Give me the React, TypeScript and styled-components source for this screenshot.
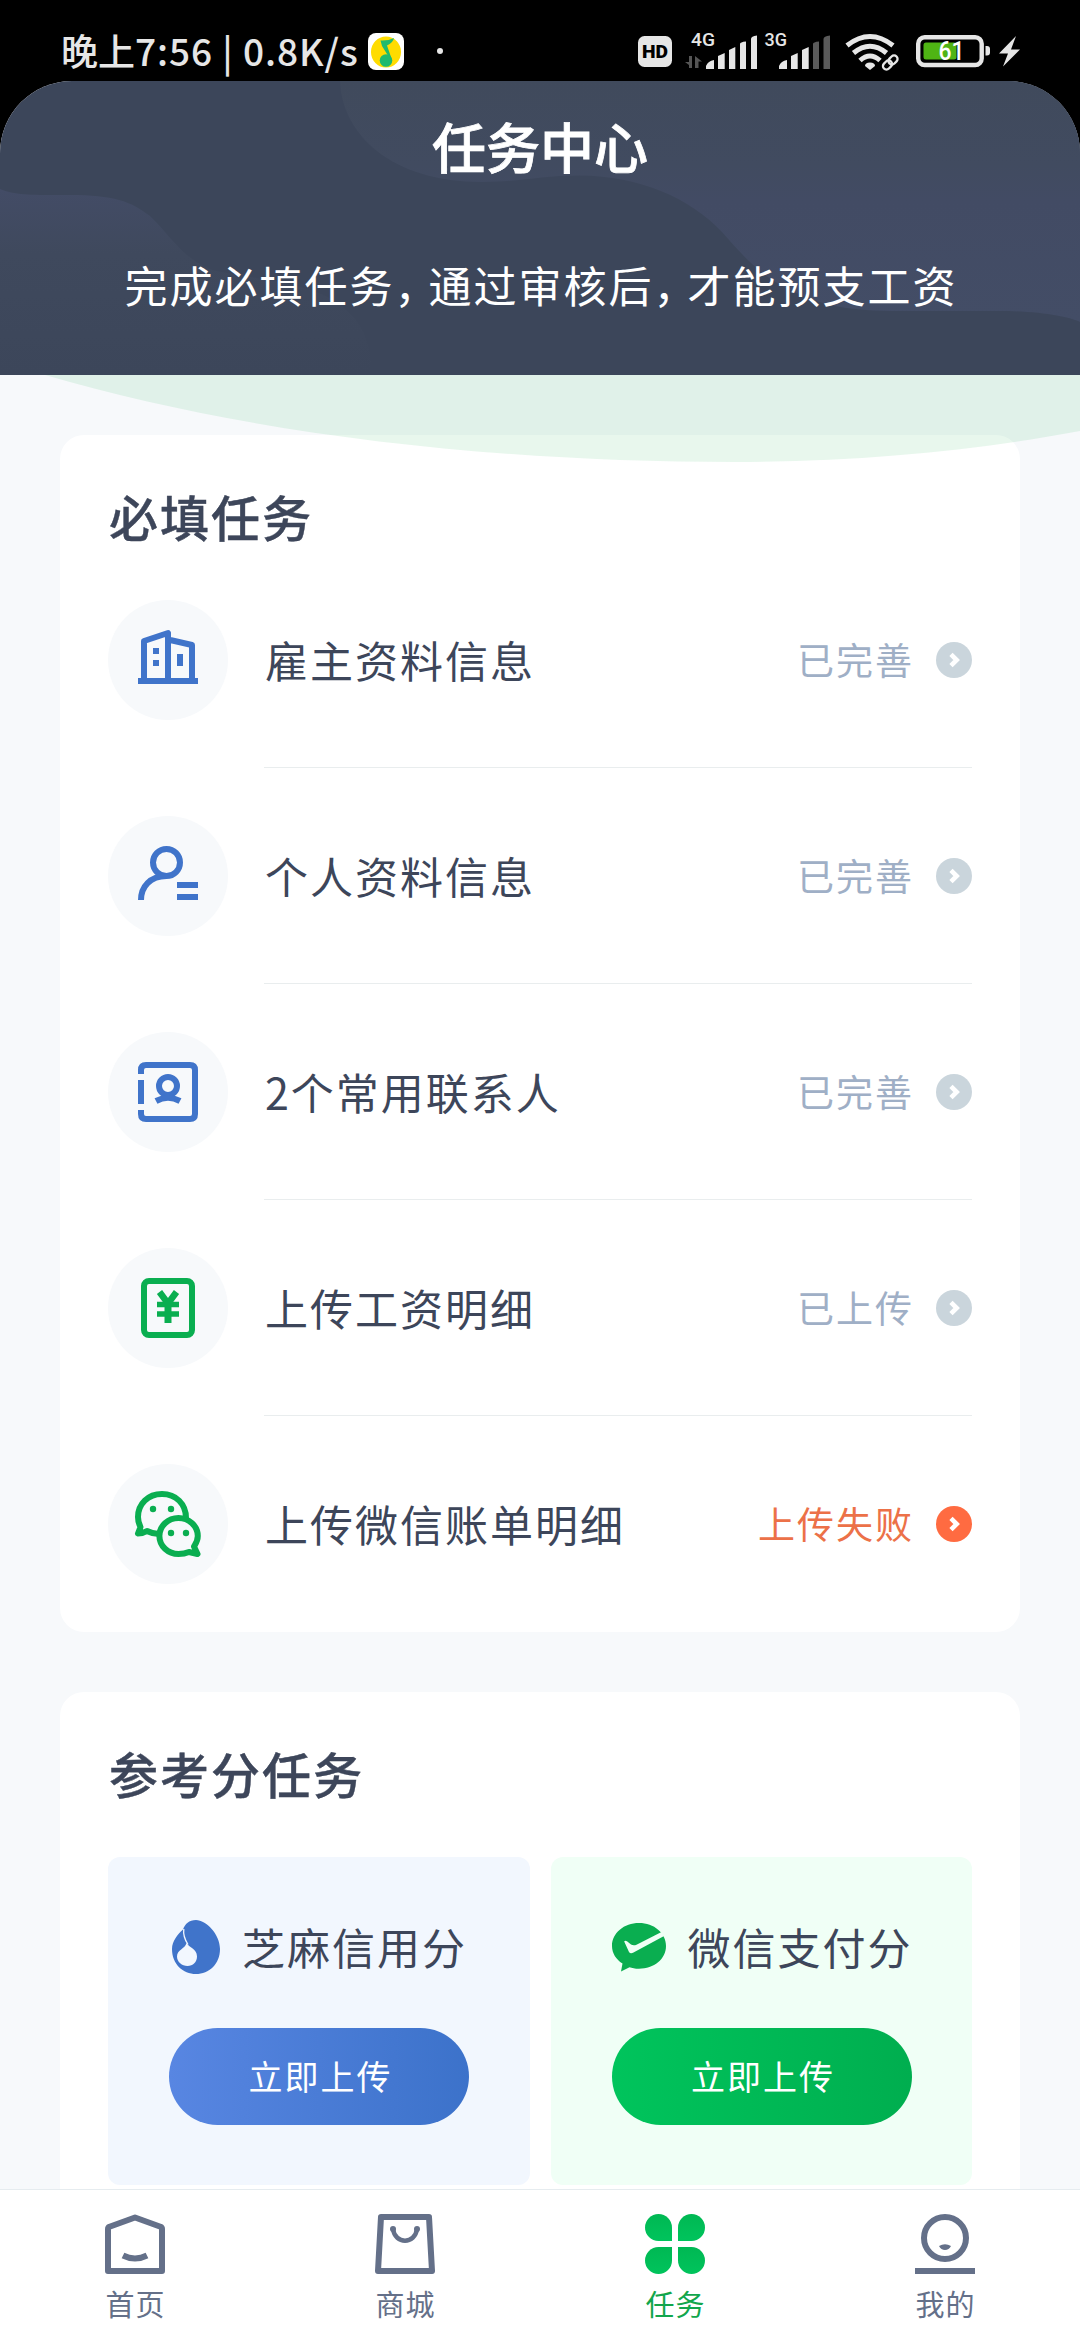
import React from "react";
import styled, { createGlobalStyle } from "styled-components";

const INK = "#3d465a";
const BLUE = "#4074ca";
const GREEN = "#0aae50";
const SLATE = "#647089";

const GlobalStyle = createGlobalStyle`
  *, *::before, *::after { box-sizing: border-box; }
  html, body { margin: 0; padding: 0; background: #000; }
  body { font-family: "Noto Sans CJK SC", "Noto Sans", sans-serif; color: ${INK}; }
  svg { display: block; flex: none; }
`;

const Screen = styled.div`
  width: 1080px;
  height: 2340px;
  display: flex;
  flex-direction: column;
  overflow: hidden;
  background: #000;
`;

/* ---------- status bar ---------- */

const StatusBar = styled.div`
  height: 81px;
  flex: none;
  display: flex;
  align-items: flex-start;
  justify-content: space-between;
  padding: 26px 60px 0 61px;
  color: #e6e6e6;
`;

const StatusGroup = styled.div`
  display: flex;
  align-items: center;
  height: 50px;
`;

const Clock = styled.span`
  width: 307px;
  height: 50px;
  padding-bottom: 2px;
  display: flex;
  align-items: center;
  font-size: 37px;
  line-height: 48px;
  font-weight: 500;
  white-space: pre;
`;

const ClockLatin = styled.span`
  font-size: 37px;
  letter-spacing: 0.95px;
`;

const Dot = styled.span`
  width: 6px;
  height: 6px;
  margin-left: 33px;
  border-radius: 50%;
  background: #e6e6e6;
`;

/* ---------- header ---------- */

const AppFrame = styled.div`
  position: relative;
  flex: 1;
  min-height: 0;
  display: flex;
  flex-direction: column;
  border-radius: 72px 72px 0 0;
  overflow: hidden;
  background: #f7f9fb;
`;

const Header = styled.header`
  position: relative;
  height: 294px;
  flex: none;
  display: flex;
  flex-direction: column;
  align-items: center;
  background: #3c465a;
  color: #fff;
`;

const HeaderArt = styled.svg`
  position: absolute;
  inset: 0;
`;

const Title = styled.h1`
  position: relative;
  margin: 25px 0 0;
  font-size: 54px;
  line-height: 80px;
  font-weight: 500;
  -webkit-text-stroke: 0.8px #fff;
`;

const Subtitle = styled.p`
  position: relative;
  margin: 67px 0 0;
  padding-left: 2px;
  font-size: 43px;
  line-height: 62px;
  letter-spacing: 2px;
  white-space: nowrap;
`;

const Comma = styled.span`
  letter-spacing: -9px;
`;

const Swoosh = styled.svg`
  position: absolute;
  left: 0;
  top: 294px;
  z-index: 2;
  pointer-events: none;
`;

/* ---------- cards ---------- */

const Content = styled.main`
  flex: 1;
  min-height: 0;
  overflow: hidden;
  display: flex;
  flex-direction: column;
  gap: 60px;
  padding: 60px 60px 0;
`;

const Card = styled.section<{ $height: number }>`
  flex: none;
  height: ${(p) => p.$height}px;
  padding: 46px 48px 0;
  border-radius: 24px;
  background: #fff;
`;

const CardTitle = styled.h2`
  margin: 0;
  padding-left: 1px;
  font-size: 49px;
  line-height: 70px;
  font-weight: 500;
  letter-spacing: 2px;
  -webkit-text-stroke: 0.4px ${INK};
`;

const TaskList = styled.ul`
  margin: 1px 0 0;
  padding: 0;
  list-style: none;
`;

const TaskRow = styled.li`
  height: 216px;
  display: flex;
  align-items: center;
  gap: 36px;
`;

const TaskIcon = styled.div`
  width: 120px;
  height: 120px;
  flex: none;
  display: grid;
  place-items: center;
  border-radius: 50%;
  background: #f7f9fb;
`;

const TaskBody = styled.div<{ $last: boolean }>`
  flex: 1;
  height: 216px;
  display: flex;
  align-items: center;
  padding-top: 1px;
  border-bottom: 1px solid ${(p) => (p.$last ? "transparent" : "#e9edee")};
`;

const TaskLabel = styled.span`
  flex: 1;
  padding: 0 0 2px 1px;
  font-size: 43px;
  line-height: 60px;
  letter-spacing: 2px;
`;

const TaskState = styled.span<{ $failed: boolean }>`
  margin-right: 22px;
  padding-bottom: 1px;
  font-size: 37px;
  line-height: 55px;
  letter-spacing: 2px;
  color: ${(p) => (p.$failed ? "#ec7148" : "#9fafc6")};
`;

const ScoreGrid = styled.div`
  display: grid;
  grid-template-columns: 422px 421px;
  gap: 21px;
  margin-top: 49px;
`;

const ScoreBox = styled.div<{ $bg: string }>`
  height: 328px;
  display: flex;
  flex-direction: column;
  align-items: center;
  padding-top: 60px;
  border-radius: 12px;
  background: ${(p) => p.$bg};
`;

const ScoreHead = styled.div`
  width: 300px;
  height: 60px;
  display: flex;
  align-items: center;
  gap: 19px;
`;

const ScoreName = styled.span<{ $shift: number }>`
  margin-left: ${(p) => p.$shift}px;
  padding-bottom: 2px;
  font-size: 43px;
  line-height: 60px;
  letter-spacing: 2px;
  white-space: nowrap;
`;

const UploadButton = styled.button<{ $from: string; $to: string }>`
  width: 300px;
  height: 97px;
  margin-top: 51px;
  padding: 0 0 2px 3px;
  border: 0;
  border-radius: 49px;
  background: linear-gradient(90deg, ${(p) => p.$from}, ${(p) => p.$to});
  color: #fff;
  font-family: inherit;
  font-size: 34px;
  letter-spacing: 2px;
`;

/* ---------- tab bar ---------- */

const TabBar = styled.nav`
  height: 151px;
  flex: none;
  display: grid;
  grid-template-columns: repeat(4, 1fr);
  border-top: 1px solid #e6ecef;
  background: #fff;
`;

const Tab = styled.div<{ $active?: boolean }>`
  display: flex;
  flex-direction: column;
  align-items: center;
  gap: 9px;
  padding-top: 24px;
  font-size: 29px;
  line-height: 40px;
  letter-spacing: 1px;
  text-indent: 1px;
  color: ${(p) => (p.$active ? "#12a64c" : SLATE)};
`;

/* ---------- drawings ---------- */

const MusicIcon = () => (
  <svg width="36" height="37" viewBox="0 0 36 37">
    <rect width="36" height="37" rx="8" fill="#fff" />
    <ellipse cx="18" cy="19" rx="15" ry="15.5" fill="#ffdc00" />
    <path d="M12.5 7.5 Q20 8 26 5 Q25 10 19 12.500 L23 24 L21.500 25 L14 13 Z" fill="#1fba6e" />
    <circle cx="18" cy="27.500" r="6.300" fill="#1fba6e" />
  </svg>
);

const StatusIcons = () => (
  <svg width="384" height="50" viewBox="636 26 384 50" fill="#e6e6e6">
    <rect x="638" y="36" width="34" height="31" rx="6.500" />
    <text x="642" y="58" fontSize="18" fontWeight="900" fill="#000" textLength="26" lengthAdjust="spacingAndGlyphs" fontFamily="Roboto, sans-serif">HD</text>
    <text x="691" y="46" fontSize="17.500" fontWeight="500" textLength="24" lengthAdjust="spacingAndGlyphs" fontFamily="Roboto, sans-serif">4G</text>
    <g fill="#555">
      <path d="M692 56 V68 H689 V65 L685 62 H689 V56Z" />
      <path d="M695 68 V56 L702 61.500 H698.500 V68Z" />
    </g>
    <path d="M706 69 V66 Q708 61 714 60 V69Z M718 69 V56 L724.700 53 V69Z M729 69 V50 L735.300 47 V69Z M740 69 V44 Q740 42 746 41.500 V69Z M751 69 V39 Q751 36 757 35.500 V69Z" />
    <text x="764.500" y="46" fontSize="17.500" fontWeight="500" textLength="22.500" lengthAdjust="spacingAndGlyphs" fontFamily="Roboto, sans-serif">3G</text>
    <path d="M779 69 V66 Q781 61 787 60 V69Z M791 69 V56 L797.700 53 V69Z M802 69 V50 L808.700 47 V69Z" />
    <path d="M813 69 V44 Q813 42 819 41.500 V69Z M823.500 69 V39 Q823.500 36 830 35.500 V69Z" fill="#5a5a5a" />
    <g fill="none" stroke="#e6e6e6" strokeWidth="5">
      <path d="M847 45.500 Q870 27.500 893 45.500" />
      <path d="M853.500 53 Q870 39.500 886.500 53" />
      <path d="M860 60.500 Q870 51.500 880 60.500" />
    </g>
    <path d="M865 66 Q865 62.500 870 62.500 Q875 62.500 875 66 L870 70Z" />
    <g fill="none" stroke="#000" strokeWidth="6">
      <rect x="-5" y="-3.500" width="9" height="7" rx="3.500" transform="translate(887.500 65.500) rotate(-45)" />
      <rect x="-4" y="-3.500" width="9" height="7" rx="3.500" transform="translate(893 60) rotate(-45)" />
    </g>
    <g fill="none" stroke="#e6e6e6" strokeWidth="2.300">
      <rect x="-5" y="-3.500" width="10" height="7" rx="3.500" transform="translate(887.500 65) rotate(-45)" />
      <rect x="-5" y="-3.500" width="10" height="7" rx="3.500" transform="translate(893 60) rotate(-45)" />
    </g>
    <rect x="918.200" y="37.200" width="63.500" height="27.800" rx="6.500" fill="none" stroke="#e6e6e6" strokeWidth="4.400" />
    <path d="M985.500 46 H987 Q990 46 990 49 V52.500 Q990 55.500 987 55.500 H985.500Z" />
    <rect x="923.500" y="42.500" width="33" height="17" rx="2.500" fill="#4fb414" />
    <text x="938.500" y="60" fontSize="25" fontWeight="500" fill="#fff" textLength="26" lengthAdjust="spacingAndGlyphs" fontFamily="Roboto, sans-serif">61</text>
    <path d="M1016 36 L999 53.500 H1008 L1003 66.500 L1020 49.500 H1011 Z" />
  </svg>
);

const HeaderWaves = () => (
  <HeaderArt width="1080" height="294" viewBox="0 81 1080 294">
    <defs>
      <linearGradient id="waveRight" x1="0" y1="0" x2="0" y2="1">
        <stop offset="0" stopColor="#404a5c" />
        <stop offset="0.35" stopColor="#414b60" />
        <stop offset="0.5" stopColor="#424b64" />
        <stop offset="1" stopColor="#434d66" />
      </linearGradient>
      <linearGradient id="waveLeft" x1="0" y1="0" x2="0" y2="1">
        <stop offset="0" stopColor="#434c66" />
        <stop offset="0.35" stopColor="#3f495d" />
        <stop offset="1" stopColor="#3c465a" />
      </linearGradient>
    </defs>
    <path fill="url(#waveRight)" d="M340 81 C342 135 392 182 482 182 C520 182 540 175.500 580 175.500 C640 176 690 198 722 232 C745 258 760 275 790 290 C822 306 850 311 900 311 L1000 311 C1040 311 1070 317 1080 322 V81Z" />
    <path fill="url(#waveLeft)" d="M0 189 C14 195 30 195 60 195 C110 194 130 200 150 216 C170 235 182 258 212 270 C280 285 372 280 372 375 H0Z" />
  </HeaderArt>
);

const BuildingIcon = () => (
  <svg width="72" height="72" viewBox="0 0 72 72" fill="none" stroke={BLUE} strokeWidth="6" strokeLinejoin="round">
    <path d="M12 57 V17 L36 9 V57 M36 15.500 L60 21 V57" />
    <path d="M6 57 H66" />
    <path d="M21 27 H27 M21 39 H27" />
    <path d="M48 30 V42" />
  </svg>
);

const PersonIcon = () => (
  <svg width="72" height="72" viewBox="0 0 72 72" fill="none" stroke={BLUE} strokeWidth="6">
    <circle cx="34.500" cy="22.500" r="13.500" />
    <path d="M9 60 C9 47 18 36 34.500 36 M45 45 H66 M45 57 H66" />
  </svg>
);

const ContactIcon = () => (
  <svg width="72" height="72" viewBox="0 0 72 72" fill="none" stroke={BLUE} strokeWidth="6">
    <path d="M9 18 V14 Q9 9 14 9 H58 Q63 9 63 14 V58 Q63 63 58 63 H14 Q9 63 9 58 V54 M9 24 V48" />
    <circle cx="36" cy="30" r="9" />
    <path d="M24 45 Q36 38.500 48 45" />
  </svg>
);

const PayrollIcon = () => (
  <svg width="72" height="72" viewBox="0 0 72 72" fill="none" stroke={GREEN} strokeWidth="6">
    <rect x="12" y="9" width="48" height="54" rx="5" />
    <path d="M27.500 20 L36 31.500 L44.500 20" strokeWidth="6.500" />
    <path d="M36 30 V51" strokeWidth="7" />
    <path d="M25 32.500 H47 M25 42 H47" strokeWidth="5.500" />
  </svg>
);

const WechatIcon = () => (
  <svg width="72" height="72" viewBox="0 0 72 72" fill="none" stroke={GREEN} strokeWidth="6" strokeLinejoin="round">
    <path d="M54 30 C54 16 44 6 30 6 C16 6 6 16 6 29 C6 34 7 36 8.500 39 L6 45.500 Q11 45.500 15 43 C19 45 23 46 27 46" />
    <path d="M46.500 30 C57 30 65.800 38 65.800 48 C65.800 53 63.500 56 62 58.500 L65.500 66 L57 64 C53.500 65.500 50 66 46.500 66 C36 66 27.400 58 27.400 48 C27.400 38 36 30 46.500 30Z" />
    <g fill={GREEN} stroke="none">
      <circle cx="21" cy="21" r="3.200" />
      <circle cx="39" cy="21" r="3.200" />
      <circle cx="39" cy="45" r="3.200" />
      <circle cx="54" cy="45" r="3.200" />
    </g>
  </svg>
);

const Chevron = ({ color }: { color: string }) => (
  <svg width="36" height="36" viewBox="0 0 36 36">
    <circle cx="18" cy="18" r="18" fill={color} />
    <path d="M15 12.300 L20.700 18 L15 23.700" fill="none" stroke="#fff" strokeWidth="4.600" />
  </svg>
);

const SesameIcon = () => (
  <svg width="54" height="54" viewBox="0 0 54 54">
    <path fill={BLUE} d="M27 0 C37 0 51 14 51 29 C51 44 40 54 27 54 C14 54 3 44 3 29 C3 21 9 14 14 9.500 C16 4 20 0 27 0Z" />
    <path d="M14.800 9 C14 15 16 20 19 24.500" fill="none" stroke="#f2f7fe" strokeWidth="1.300" />
    <path fill="#f2f7fe" d="M17.500 23 C20 27.500 28 28.500 28 36.500 C28 42 24 46 18.500 46 C13 46 8 42 8 36.500 C8 29.500 16 29 17.500 23Z" />
  </svg>
);

const WechatPayIcon = () => (
  <svg width="54" height="54" viewBox="0 0 54 54">
    <path fill={GREEN} d="M27 3 C42 3 54 13 54 26 C54 39 42 48.700 27 48.700 C23 48.700 20 48 17.500 47.200 L9 51.500 L10.500 43.500 C4 39.500 0 33 0 26 C0 13 12 3 27 3Z" />
    <path fill="#f0fff6" d="M12.200 21.500 Q12.700 20 15 21.200 L19 24.500 Q21.500 26 24.500 24.700 L49.500 12 L53 15.500 L21.500 32.500 Q18.500 34.300 17 32Z" />
  </svg>
);

const HomeIcon = () => (
  <svg width="60" height="60" viewBox="0 0 60 60" fill="none" stroke={SLATE} strokeWidth="6" strokeLinejoin="round">
    <path d="M30 3.500 L55.500 12.800 Q57 13.500 57 15 V57 H3 V15 Q3 13.500 4.500 12.800Z" />
    <path d="M18 41.500 Q30 47.500 42 41.500" />
  </svg>
);

const BagIcon = () => (
  <svg width="60" height="60" viewBox="0 0 60 60" fill="none" stroke={SLATE} strokeLinejoin="round">
    <path d="M6 3 H54 L57 57 H3Z" strokeWidth="6" />
    <path d="M18 15 C20 30.500 40 30.500 42 15" strokeWidth="4.500" />
    <circle cx="18" cy="15" r="3" fill={SLATE} stroke="none" />
    <circle cx="42" cy="15" r="3" fill={SLATE} stroke="none" />
  </svg>
);

const CloverIcon = () => (
  <svg width="60" height="60" viewBox="0 0 60 60">
    <defs>
      <linearGradient id="petal" x1="0" y1="0" x2="0" y2="1">
        <stop offset="0" stopColor="#00b853" />
        <stop offset="1" stopColor="#00c45c" />
      </linearGradient>
    </defs>
    <g fill="url(#petal)">
      <path d="M27 27 H13.500 A13.500 13.500 0 1 1 27 13.500Z" />
      <path d="M33 27 H46.500 A13.500 13.500 0 1 0 33 13.500Z" />
      <path d="M27 33 H13.500 A13.500 13.500 0 1 0 27 46.500Z" />
      <path d="M33 33 H46.500 A13.500 13.500 0 1 1 33 46.500Z" />
    </g>
  </svg>
);

const MeIcon = () => (
  <svg width="60" height="60" viewBox="0 0 60 60">
    <circle cx="30" cy="24" r="21" fill="none" stroke={SLATE} strokeWidth="6" />
    <path d="M24 32 Q30 28.500 36 32 Q34 36 30 36 Q26 36 24 32Z M0 54 H60 V60 H0Z" fill={SLATE} />
  </svg>
);

const tasks = [
  { label: "雇主资料信息", state: "已完善", failed: false, icon: <BuildingIcon /> },
  { label: "个人资料信息", state: "已完善", failed: false, icon: <PersonIcon /> },
  { label: "2个常用联系人", state: "已完善", failed: false, icon: <ContactIcon /> },
  { label: "上传工资明细", state: "已上传", failed: false, icon: <PayrollIcon /> },
  { label: "上传微信账单明细", state: "上传失败", failed: true, icon: <WechatIcon /> },
];

export default function App() {
  return (
    <Screen>
      <GlobalStyle />
      <StatusBar>
        <StatusGroup>
          <Clock>
            晚上<ClockLatin>7:56 | 0.8K/s</ClockLatin>
          </Clock>
          <MusicIcon />
          <Dot />
        </StatusGroup>
        <StatusIcons />
      </StatusBar>
      <AppFrame>
        <Header>
          <HeaderWaves />
          <Title>任务中心</Title>
          <Subtitle>
            完成必填任务<Comma>，</Comma>通过审核后<Comma>，</Comma>才能预支工资
          </Subtitle>
        </Header>
        <Swoosh width="1080" height="90" viewBox="0 375 1080 90">
          <path fill="rgba(25, 178, 78, 0.1)" d="M45 375 C240 432 480 462 735 462 C860 462 980 450 1080 431 V375Z" />
        </Swoosh>
        <Content>
          <Card $height={1197}>
            <CardTitle>必填任务</CardTitle>
            <TaskList>
              {tasks.map((t, i) => (
                <TaskRow key={t.label}>
                  <TaskIcon>{t.icon}</TaskIcon>
                  <TaskBody $last={i === tasks.length - 1}>
                    <TaskLabel>{t.label}</TaskLabel>
                    <TaskState $failed={t.failed}>{t.state}</TaskState>
                    <Chevron color={t.failed ? "#ff6b41" : "#cad5dc"} />
                  </TaskBody>
                </TaskRow>
              ))}
            </TaskList>
          </Card>
          <Card $height={560}>
            <CardTitle>参考分任务</CardTitle>
            <ScoreGrid>
              <ScoreBox $bg="#f2f7fe">
                <ScoreHead>
                  <SesameIcon />
                  <ScoreName $shift={0}>芝麻信用分</ScoreName>
                </ScoreHead>
                <UploadButton $from="#5886e2" $to="#3c72ca">立即上传</UploadButton>
              </ScoreBox>
              <ScoreBox $bg="#f0fff6">
                <ScoreHead>
                  <WechatPayIcon />
                  <ScoreName $shift={3}>微信支付分</ScoreName>
                </ScoreHead>
                <UploadButton $from="#00c45c" $to="#00ae4f">立即上传</UploadButton>
              </ScoreBox>
            </ScoreGrid>
          </Card>
        </Content>
        <TabBar>
          <Tab><HomeIcon />首页</Tab>
          <Tab><BagIcon />商城</Tab>
          <Tab $active><CloverIcon />任务</Tab>
          <Tab><MeIcon />我的</Tab>
        </TabBar>
      </AppFrame>
    </Screen>
  );
}
